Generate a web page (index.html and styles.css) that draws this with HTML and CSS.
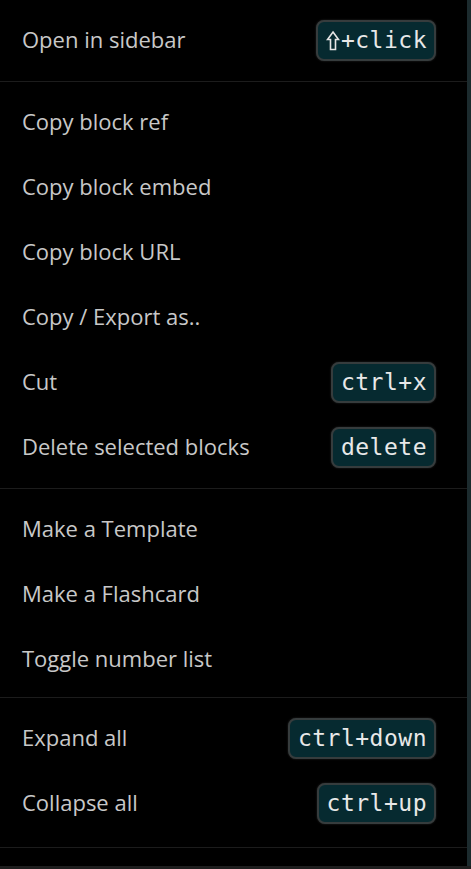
FILE: index.html
```html
<!DOCTYPE html>
<html>
<head>
<meta charset="utf-8">
<link rel="stylesheet" href="styles.css">
</head>
<body>
<div class="wrap">
  <div class="menu">
    <div class="section">
      <div class="row"><span class="label">Open in sidebar</span><span class="kbd"><svg class="shift" viewBox="0 0 14 22" width="14" height="22"><path d="M7 2 L12.5 9.5 H9.5 V19.5 H4.5 V9.5 H1.5 Z" fill="none" stroke="#e6e6e6" stroke-width="1.6" stroke-linejoin="miter"/></svg>+click</span></div>
    </div>
    <div class="section">
      <div class="row"><span class="label">Copy block ref</span></div>
      <div class="row"><span class="label">Copy block embed</span></div>
      <div class="row"><span class="label">Copy block URL</span></div>
      <div class="row"><span class="label">Copy / Export as..</span></div>
      <div class="row"><span class="label">Cut</span><span class="kbd">ctrl+x</span></div>
      <div class="row"><span class="label">Delete selected blocks</span><span class="kbd">delete</span></div>
    </div>
    <div class="section short">
      <div class="row"><span class="label">Make a Template</span></div>
      <div class="row"><span class="label">Make a Flashcard</span></div>
      <div class="row"><span class="label">Toggle number list</span></div>
    </div>
    <div class="section long">
      <div class="row"><span class="label">Expand all</span><span class="kbd">ctrl+down</span></div>
      <div class="row"><span class="label">Collapse all</span><span class="kbd">ctrl+up</span></div>
    </div>
    <div class="tail"></div>
  </div>
  <div class="scroll"></div>
</div>
<div class="bottom"></div>
</body>
</html>
```
FILE: styles.css
```css
html, body {
  margin: 0;
  padding: 0;
  background: #000;
  height: 869px;
  overflow: hidden;
}
.wrap {
  display: flex;
  height: 866px;
}
.menu {
  width: 467px;
  display: flex;
  flex-direction: column;
}
.scroll {
  width: 4px;
  background: #1c2b2e;
}
.section {
  padding: 8px 0;
  border-bottom: 1px solid #1c1c1c;
}
.section.short {
  padding-bottom: 5px;
}
.section.long {
  padding-bottom: 11px;
}
.row {
  height: 65px;
  display: flex;
  align-items: center;
  justify-content: space-between;
  padding: 0 31px 0 22px;
}
.label {
  font-family: "Open Sans", sans-serif;
  font-size: 22px;
  color: #c8c8c8;
  padding-bottom: 3px;
}
.kbd {
  display: flex;
  align-items: center;
  font-family: "DejaVu Sans Mono", monospace;
  font-size: 23px;
  letter-spacing: 0.5px;
  color: #e8e8e8;
  background: #062a30;
  border: 2px solid #363c3d;
  border-radius: 8px;
  padding: 3px 7px 3px 7.5px;
  height: 31px;
  line-height: 31px;
  box-shadow: 0 0 2px rgba(90, 90, 90, 0.5);
}
.shift {
  display: block;
  margin: 0 0.5px;
}
.tail {
  flex: 1;
}
.bottom {
  height: 3px;
  background: #1e1e1e;
}
```
